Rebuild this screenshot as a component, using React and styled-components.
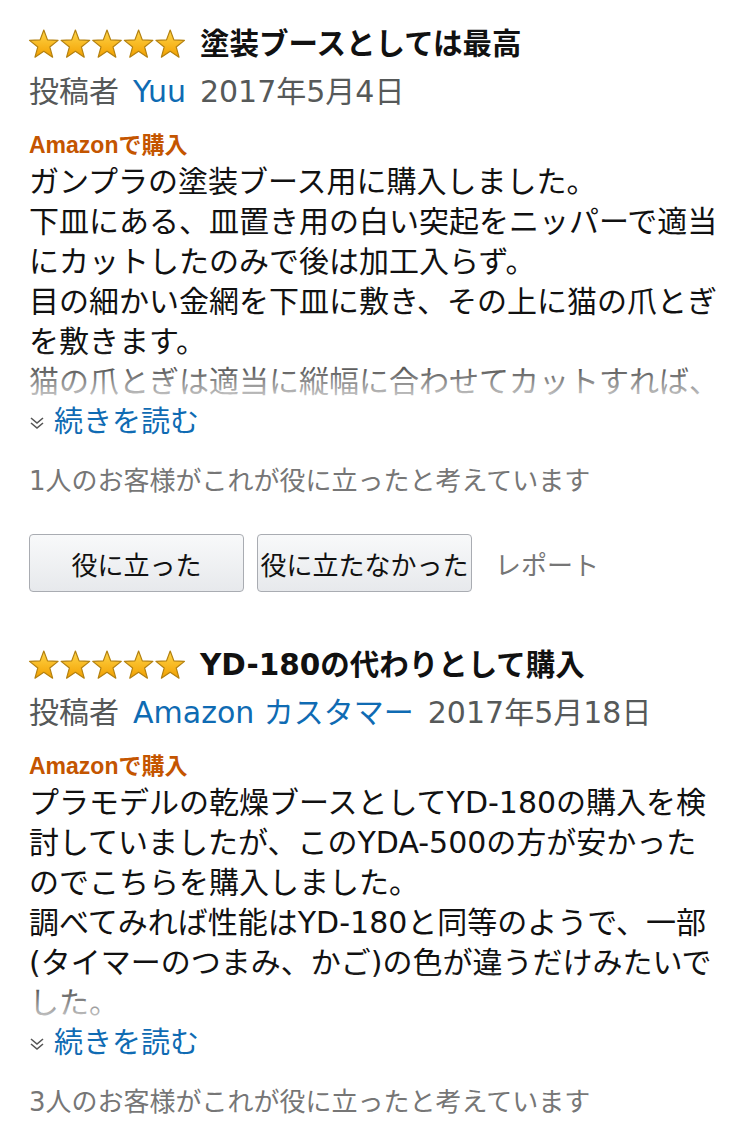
import React from 'react'
import styled, { createGlobalStyle } from 'styled-components'

const GlobalStyle = createGlobalStyle`
  body {
    margin: 0;
    background: #fff;
    font-family: "DejaVu Sans", "Noto Sans CJK JP", sans-serif;
    color: #111;
  }
`

// only the lines that show above the "read more" fold
const reviews = [
  {
    title: '塗装ブースとしては最高',
    author: 'Yuu',
    date: '2017年5月4日',
    lines: [
      'ガンプラの塗装ブース用に購入しました。',
      '下皿にある、皿置き用の白い突起をニッパーで適当',
      'にカットしたのみで後は加工入らず。',
      '目の細かい金網を下皿に敷き、その上に猫の爪とぎ',
      'を敷きます。',
      '猫の爪とぎは適当に縦幅に合わせてカットすれば、'
    ],
    helpful: 1,
    showButtons: true
  },
  {
    title: 'YD-180の代わりとして購入',
    author: 'Amazon カスタマー',
    date: '2017年5月18日',
    lines: [
      'プラモデルの乾燥ブースとしてYD-180の購入を検',
      '討していましたが、このYDA-500の方が安かった',
      'のでこちらを購入しました。',
      '調べてみれば性能はYD-180と同等のようで、一部',
      '(タイマーのつまみ、かご)の色が違うだけみたいで',
      'した。'
    ],
    helpful: 3,
    showButtons: false
  }
]

function starPoints(cx, cy, R, r) {
  const pts = []
  for (let i = 0; i < 10; i++) {
    const a = (-90 + 36 * i) * Math.PI / 180
    const rad = i % 2 === 0 ? R : r
    pts.push(`${(cx + rad * Math.cos(a)).toFixed(2)},${(cy + rad * Math.sin(a)).toFixed(2)}`)
  }
  return pts.join(' ')
}

function Stars() {
  return (
    <svg width="160" height="32" viewBox="0 0 160 32">
      <defs>
        <linearGradient id="starFill" x1="0" y1="0" x2="0" y2="1">
          <stop offset="0" stopColor="#ffd64a" />
          <stop offset="1" stopColor="#f2a000" />
        </linearGradient>
      </defs>
      {[0, 1, 2, 3, 4].map(i => (
        <polygon
          key={i}
          points={starPoints(15.8 + i * 31.6, 17, 15, 6.3)}
          fill="url(#starFill)"
          stroke="#b3800f"
          strokeWidth="1.2"
          strokeLinejoin="round"
        />
      ))}
    </svg>
  )
}

function Chevrons() {
  return (
    <svg width="16" height="16" viewBox="0 0 16 16">
      <polyline points="2,3 8,8 14,3" fill="none" stroke="#555" strokeWidth="1.6" />
      <polyline points="2,8 8,13 14,8" fill="none" stroke="#555" strokeWidth="1.6" />
    </svg>
  )
}

function Review({ review, first }) {
  return (
    <Card $first={first}>
      <Header>
        <Stars />
        <Title>{review.title}</Title>
      </Header>
      <Byline>
        <span>投稿者</span>
        <Author>{review.author}</Author>
        <span>{review.date}</span>
      </Byline>
      <Badge>Amazonで購入</Badge>
      <Body>
        {review.lines.map((l, i) => <Line key={i}>{l}</Line>)}
      </Body>
      <ReadMore>
        <Chevrons />
        <span>続きを読む</span>
      </ReadMore>
      <Helpful>{review.helpful}人のお客様がこれが役に立ったと考えています</Helpful>
      {review.showButtons && (
        <Actions>
          <VoteButton>役に立った</VoteButton>
          <VoteButton>役に立たなかった</VoteButton>
          <Report>レポート</Report>
        </Actions>
      )}
    </Card>
  )
}

export default function App() {
  return (
    <>
      <GlobalStyle />
      <Page>
        {reviews.map((r, i) => <Review key={i} review={r} first={i === 0} />)}
      </Page>
    </>
  )
}

const Page = styled.div`
  width: 749px;
  padding: 28px 29px 0 29px;
  box-sizing: border-box;
`

const Card = styled.section`
  margin-top: ${p => (p.$first ? '0' : '57px')};
`

const Header = styled.div`
  display: flex;
  align-items: center;
  height: 32px;
  gap: 12px;
  margin-left: -1px;
`

const Title = styled.h2`
  margin: 0;
  font-family: "DejaVu Sans", "Noto Sans CJK JP", sans-serif;
  font-size: 29.5px;
  font-weight: bold;
  color: #111;
  line-height: 32px;
  white-space: nowrap;
`

const Byline = styled.div`
  display: flex;
  gap: 14px;
  margin-top: 12px;
  height: 40px;
  line-height: 40px;
  font-size: 30px;
  color: #565959;
  white-space: nowrap;
`

const Author = styled.span`
  color: #0f6bb3;
`

const Badge = styled.div`
  margin-top: 19px;
  height: 28px;
  line-height: 28px;
  font-family: "Liberation Sans", "Noto Sans CJK JP", sans-serif;
  font-size: 23px;
  font-weight: bold;
  color: #c45500;
`

const Body = styled.div`
  position: relative;
  margin-top: 3px;
  max-height: 240px;
  overflow: hidden;
  font-size: 30px;
  line-height: 40px;
  color: #111;
  &::after {
    content: '';
    position: absolute;
    left: 0;
    right: 0;
    bottom: 0;
    height: 52px;
    background: linear-gradient(to bottom, rgba(255,255,255,0), rgba(255,255,255,0.85));
  }
`

const Line = styled.div`
  white-space: nowrap;
`

const ReadMore = styled.div`
  display: flex;
  align-items: center;
  gap: 9px;
  line-height: 40px;
  font-size: 29px;
  color: #0f6bb3;
  svg {
    margin-top: 2px;
  }
`

const Helpful = styled.div`
  margin-top: 21px;
  height: 36px;
  line-height: 36px;
  font-size: 26px;
  color: #767676;
  white-space: nowrap;
`

const Actions = styled.div`
  display: flex;
  align-items: center;
  gap: 13px;
  margin-top: 35px;
`

const VoteButton = styled.button`
  width: 215px;
  height: 58px;
  padding: 0;
  border: 1.5px solid #a9acb2;
  border-radius: 4px;
  background: linear-gradient(to bottom, #f8f9fa, #e7e9ec);
  font-family: "DejaVu Sans", "Noto Sans CJK JP", sans-serif;
  font-size: 26px;
  color: #111;
  white-space: nowrap;
`

const Report = styled.span`
  margin-left: 10px;
  font-size: 26px;
  color: #767676;
`
